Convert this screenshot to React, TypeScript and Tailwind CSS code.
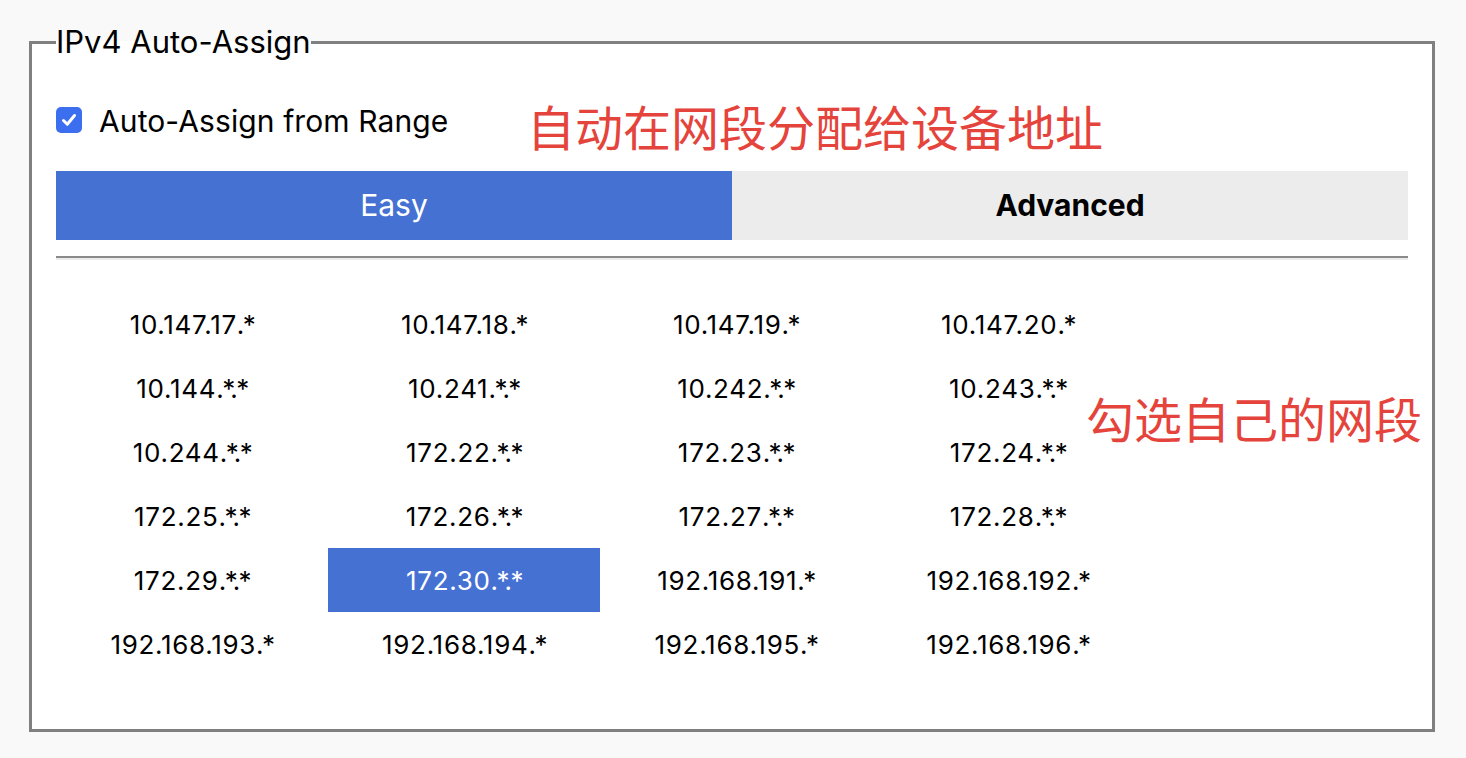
import { useState } from "react";

const ranges = [
  "10.147.17.*",
  "10.147.18.*",
  "10.147.19.*",
  "10.147.20.*",
  "10.144.*.*",
  "10.241.*.*",
  "10.242.*.*",
  "10.243.*.*",
  "10.244.*.*",
  "172.22.*.*",
  "172.23.*.*",
  "172.24.*.*",
  "172.25.*.*",
  "172.26.*.*",
  "172.27.*.*",
  "172.28.*.*",
  "172.29.*.*",
  "172.30.*.*",
  "192.168.191.*",
  "192.168.192.*",
  "192.168.193.*",
  "192.168.194.*",
  "192.168.195.*",
  "192.168.196.*",
];

// the ".*" tail is drawn tighter than the digits
function Range({ value }: { value: string }) {
  const i = value.indexOf("*");
  if (i < 0) return <>{value}</>;
  return (
    <>
      {value.slice(0, i - 1)}
      <span className="tracking-[-1.5px]">{value.slice(i - 1)}</span>
    </>
  );
}

export default function App() {
  const [selected, setSelected] = useState("172.30.*.*");
  const [tab, setTab] = useState<"easy" | "advanced">("easy");
  const [auto, setAuto] = useState(true);

  return (
    <div className="min-h-screen bg-[#f9f9f9] pt-[26px] pl-[29px] font-['Inter','Noto_Sans_CJK_SC',sans-serif] text-black">
      <fieldset className="relative w-[1406px] border-[3px] border-[#808080] bg-white px-[24px] pb-[53px]">
        <legend className="p-0 text-[31px] leading-[32px]">IPv4 Auto-Assign</legend>

        {/* annotations */}
        <div className="absolute left-[495px] top-[39px] text-[48px] leading-[56px] text-[#e5443c] font-['Noto_Sans_CJK_SC',sans-serif]">
          自动在网段分配给设备地址
        </div>
        <div className="absolute left-[1054px] top-[331px] text-[48px] leading-[56px] text-[#e5443c] font-['Noto_Sans_CJK_SC',sans-serif]">
          勾选自己的网段
        </div>

        <label
          className="mt-[42px] flex h-[40px] items-center gap-[17px] text-[30px] tracking-[0.1px]"
          onClick={() => setAuto(!auto)}
        >
          <span
            className={
              auto
                ? "flex h-[26px] w-[26px] items-center justify-center rounded-[5px] bg-[#3b6ff0]"
                : "flex h-[26px] w-[26px] items-center justify-center rounded-[5px] border-2 border-[#999] bg-white"
            }
          >
            {auto && (
              <svg width="18" height="18" viewBox="0 0 18 18" fill="none">
                <path
                  d="M3.5 9.5l3.8 3.8L14.5 4.5"
                  stroke="white"
                  strokeWidth="3"
                  strokeLinecap="round"
                  strokeLinejoin="round"
                />
              </svg>
            )}
          </span>
          <span className="pt-[3px]">Auto-Assign from Range</span>
        </label>

        <div className="mt-[31px] flex h-[69px]">
          <button
            className={
              tab === "easy"
                ? "flex-1 bg-[#4571d3] text-[30px] text-white"
                : "flex-1 bg-[#ececec] text-[30px] font-bold text-black"
            }
            onClick={() => setTab("easy")}
          >
            Easy
          </button>
          <button
            className={
              tab === "advanced"
                ? "flex-1 bg-[#4571d3] text-[30px] text-white"
                : "flex-1 bg-[#ececec] text-[30px] font-bold text-black"
            }
            onClick={() => setTab("advanced")}
          >
            Advanced
          </button>
        </div>

        <hr className="mt-[16px] border-t-2 border-b-2 border-t-[#8a8a8a] border-b-[#ececec]" />

        <div className="mt-[32px] grid w-[1088px] grid-cols-4">
          {ranges.map((r) => (
            <div
              key={r}
              onClick={() => setSelected(r)}
              className={
                r === selected
                  ? "flex h-[64px] items-center justify-center bg-[#4571d3] text-[26px] tracking-[0.7px] text-white"
                  : "flex h-[64px] items-center justify-center text-[26px] tracking-[0.7px] text-black"
              }
            >
              <span>
                <Range value={r} />
              </span>
            </div>
          ))}
        </div>
      </fieldset>
    </div>
  );
}
